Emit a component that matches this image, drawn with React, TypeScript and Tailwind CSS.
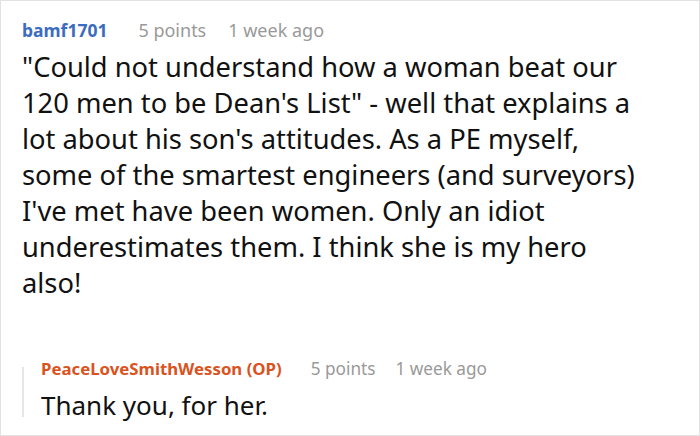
import React from 'react';

const font = { fontFamily: '"Noto Sans", "Open Sans", sans-serif' };

const Header: React.FC<{ name: string; color: string; small?: boolean }> = ({ name, color, small }) => (
  <div className={`flex items-baseline leading-[24px] ${small ? 'text-[16.8px]' : 'text-[17.5px]'}`}>
    <span className={`font-bold ${color}`}>{name}</span>
    <span className={`text-[#999999] ${small ? 'ml-[29px] text-[17.2px]' : 'ml-[31px] text-[18px]'}`}>5 points</span>
    <span className={`text-[#999999] ${small ? 'ml-[20px] text-[17.2px]' : 'ml-[22px] text-[18px]'}`}>1 week ago</span>
  </div>
);

const App: React.FC = () => {
  return (
    <div className="w-[700px] h-[436px] bg-white border border-[#e2e2e2] overflow-hidden" style={font}>
      <div className="px-[21px] pt-[17px]">
        <Header name="bamf1701" color="text-[#3b6cc0]" />
        <p className="mt-[7px] w-[631px] text-[27.3px] leading-[36px] text-[#111111]">
          "Could not understand how a woman beat our 120 men to be Dean's List" - well that explains a lot about his son's attitudes. As a PE myself, some of the smartest engineers (and surveyors) I've met have been women. Only an idiot underestimates them. I think she is my hero also!
        </p>

        <div className="mt-[56px] flex">
          <div className="w-[2px] bg-[#e6e6e6] mt-[10px] mb-[6px] shrink-0" />
          <div className="pl-[17px]">
            <Header name="PeaceLoveSmithWesson (OP)" color="text-[#d9531e]" small />
            <p className="mt-[6px] text-[26px] leading-[36px] text-[#111111]">Thank you, for her.</p>
          </div>
        </div>
      </div>
    </div>
  );
};

export default App;
